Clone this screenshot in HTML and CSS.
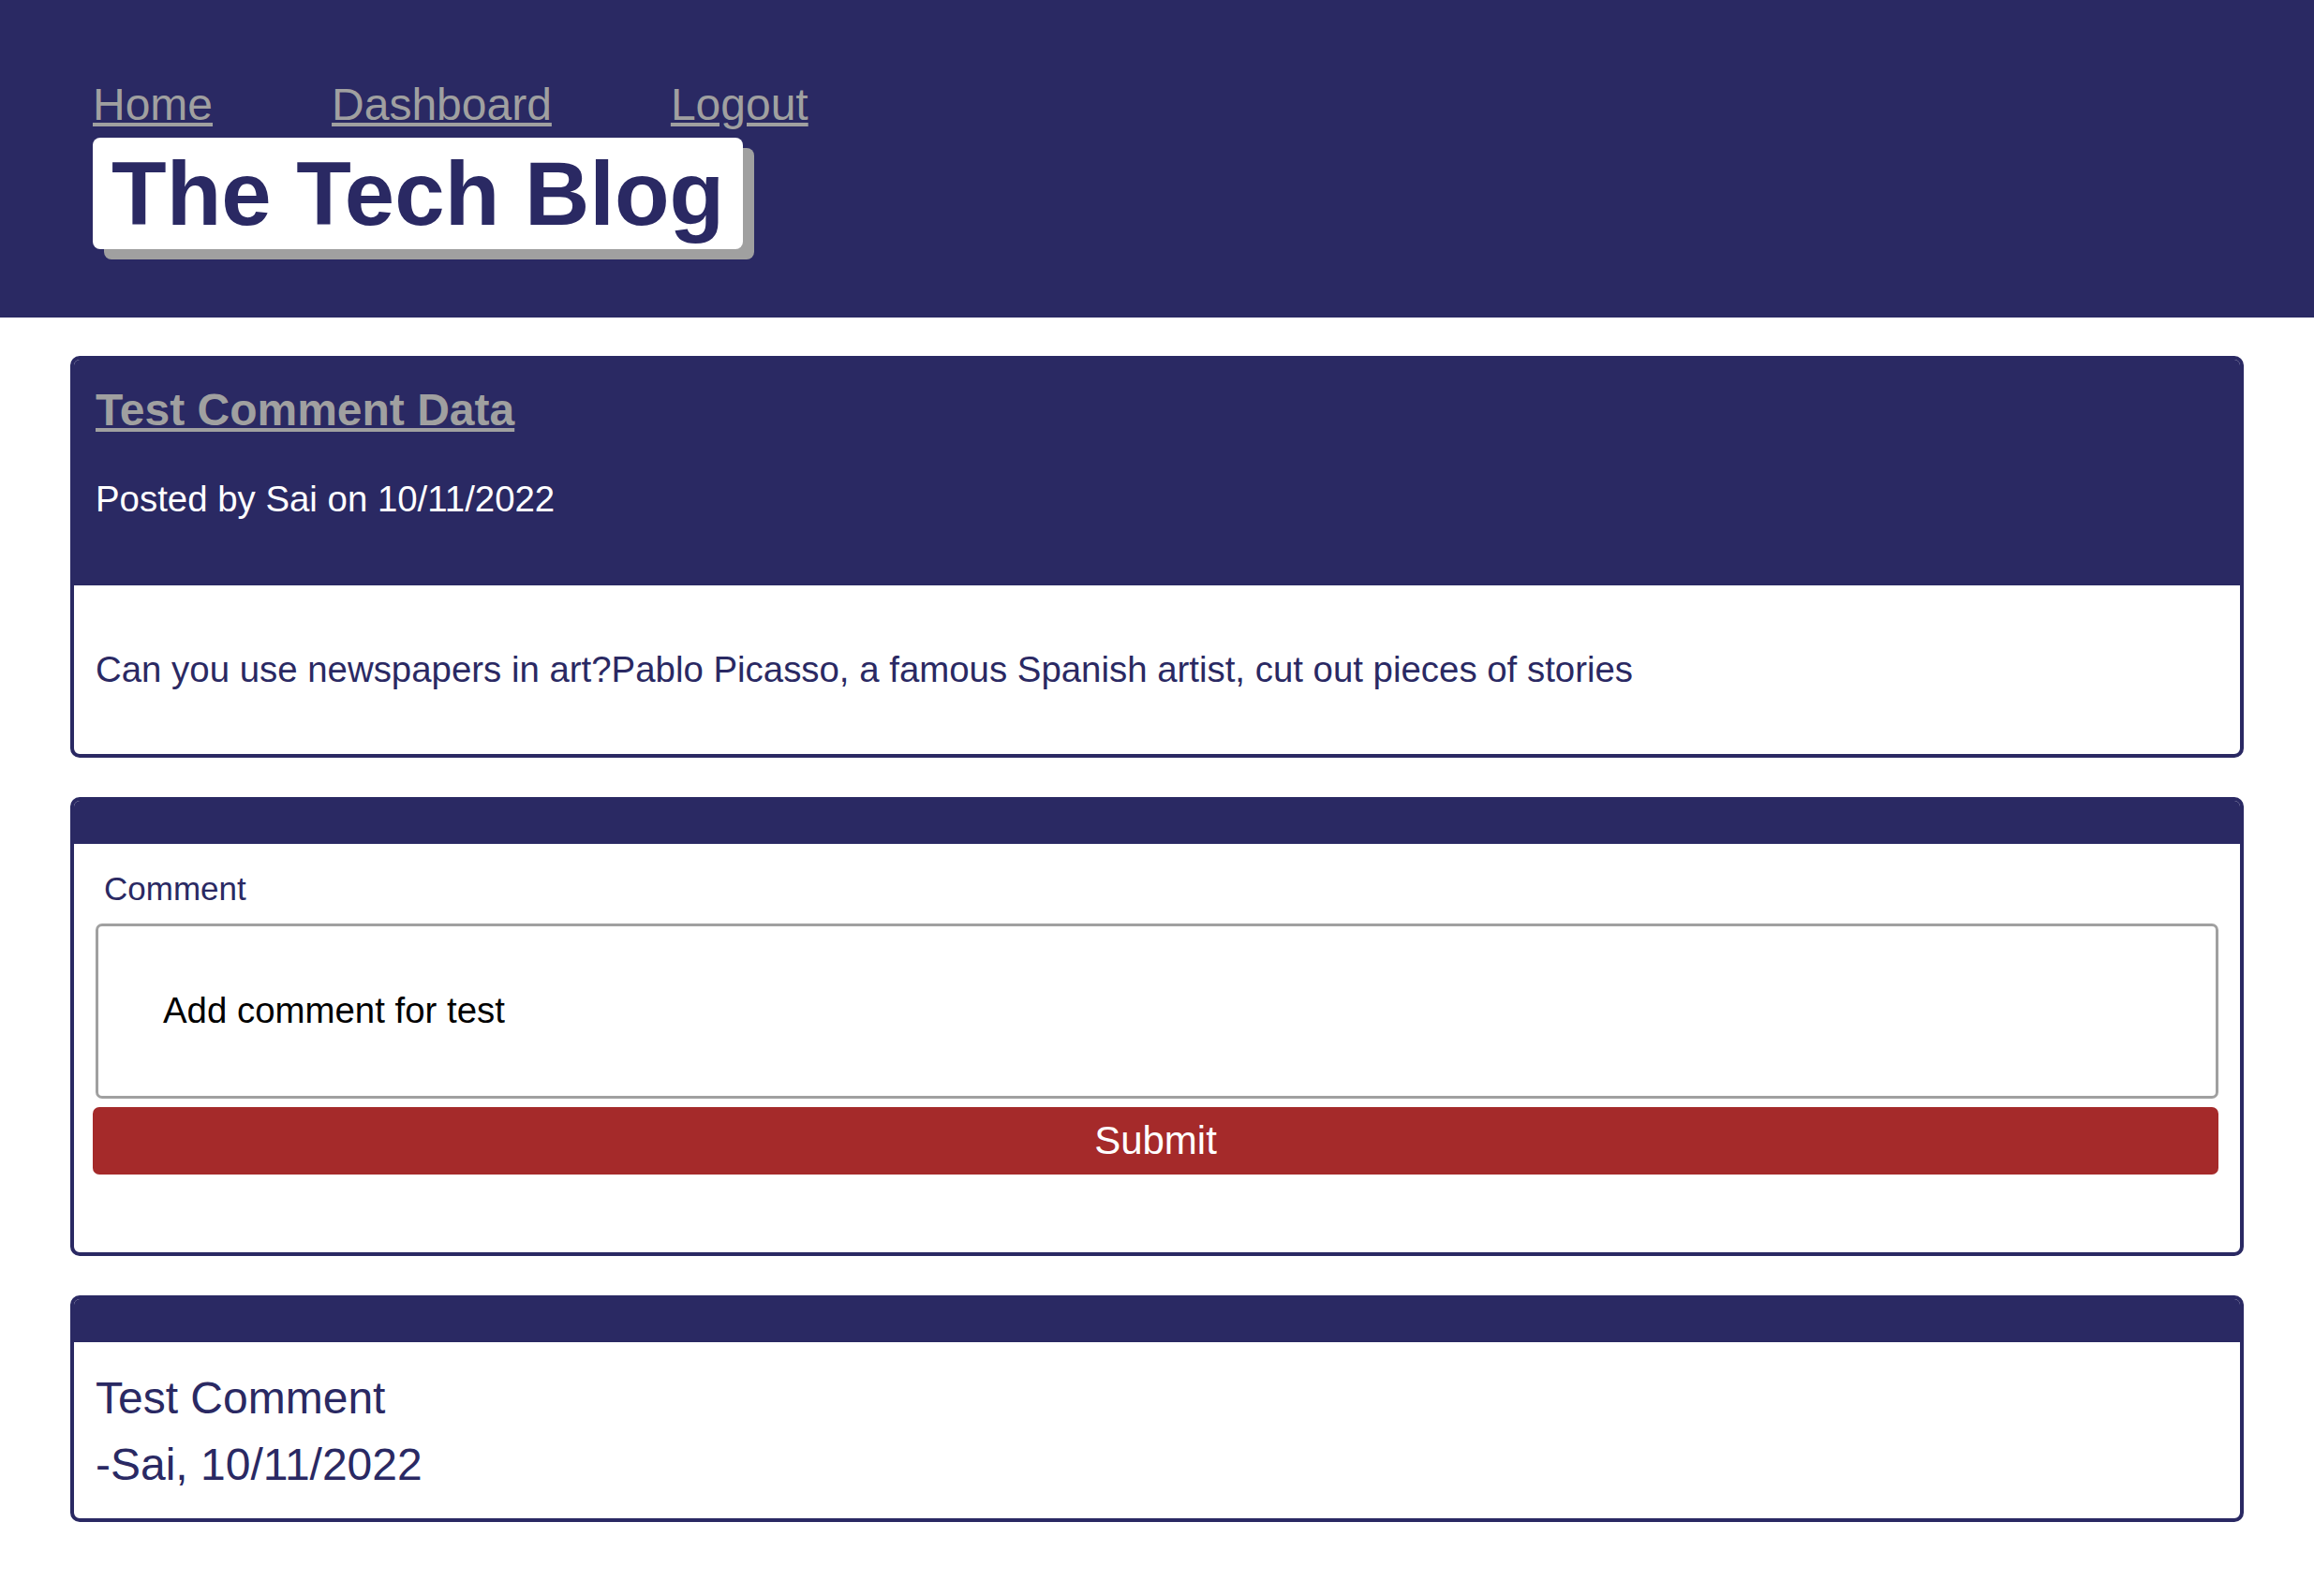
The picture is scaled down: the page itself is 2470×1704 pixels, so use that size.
FILE: index.html
```html
<!DOCTYPE html>
<html lang="en">
<head>
<meta charset="utf-8">
<title>The Tech Blog</title>
<link rel="stylesheet" href="styles.css">
</head>
<body>
<header class="site-header">
  <nav class="nav">
    <a href="#" class="nav-link">Home</a>
    <a href="#" class="nav-link">Dashboard</a>
    <a href="#" class="nav-link">Logout</a>
  </nav>
  <h1 class="brand">The Tech Blog</h1>
</header>
<main class="main">
  <article class="card">
    <div class="card-header post-header">
      <h2 class="post-title"><a href="#">Test Comment Data</a></h2>
      <p class="post-meta">Posted by Sai on 10/11/2022</p>
    </div>
    <div class="card-body post-body">
      <p>Can you use newspapers in art?Pablo Picasso, a famous Spanish artist, cut out pieces of stories</p>
    </div>
  </article>

  <section class="card">
    <div class="card-header empty-header"></div>
    <form class="card-body comment-form">
      <label class="comment-label" for="comment">Comment</label>
      <textarea id="comment" class="comment-input">Add comment for test</textarea>
      <button type="button" class="submit-btn">Submit</button>
    </form>
  </section>

  <section class="card">
    <div class="card-header empty-header"></div>
    <div class="card-body comment">
      <div class="comment-text">Test Comment</div>
      <div class="comment-text">-Sai, 10/11/2022</div>
    </div>
  </section>
</main>
</body>
</html>
```

FILE: styles.css
```css
* { box-sizing: border-box; }

html, body {
  margin: 0;
  padding: 0;
  background: #ffffff;
  font-family: "Liberation Sans", Arial, Helvetica, sans-serif;
  color: #2a2963;
}

.site-header {
  background: #2a2963;
  height: 339px;
  padding: 84px 0 0 99px;
}

.nav {
  display: flex;
  gap: 127px;
}

.nav-link {
  font-size: 48px;
  line-height: 55px;
  color: #a0a0a0;
  text-decoration: underline;
}

.brand {
  display: inline-block;
  margin: 8px 0 0 0;
  padding: 5px 20px 5px 20px;
  background: #ffffff;
  color: #2a2963;
  font-size: 96px;
  font-weight: bold;
  line-height: 109px;
  border-radius: 8px;
  box-shadow: 12px 11px 0 0 #a0a0a0;
}

.main {
  padding: 41px 75px 40px;
}

.card {
  border: 4px solid #2a2963;
  border-radius: 10px;
  overflow: hidden;
  margin-bottom: 42px;
  background: #ffffff;
}

.card-header {
  background: #2a2963;
}

.post-header {
  padding: 27px 23px;
}

.post-title {
  margin: 0;
  font-size: 48px;
  line-height: 53px;
  font-weight: bold;
}

.post-title a {
  color: #a0a0a0;
  text-decoration: underline;
}

.post-meta {
  margin: 47px 0 43px;
  font-size: 38.4px;
  line-height: 44px;
  color: #ffffff;
}

.empty-header {
  height: 46px;
}

.post-body {
  padding: 68px 23px;
}

.post-body p {
  margin: 0;
  font-size: 38.4px;
  line-height: 44px;
  color: #2a2963;
}

.comment-form {
  display: flex;
  flex-direction: column;
  padding: 28px 23px 83px;
}

.comment-label {
  font-size: 35px;
  line-height: 40px;
  padding-left: 9px;
  color: #2a2963;
}

.comment-input {
  display: block;
  width: 100%;
  height: 187px;
  margin-top: 17px;
  padding: 68px 69px;
  border: 3px solid #a0a0a0;
  border-radius: 7px;
  font-family: "Liberation Sans", Arial, Helvetica, sans-serif;
  font-size: 38.4px;
  line-height: 44px;
  color: #000000;
  resize: none;
  overflow: hidden;
  background: #ffffff;
}

.submit-btn {
  display: block;
  width: calc(100% + 3px);
  margin: 9px 0 0 -3px;
  height: 72px;
  border: none;
  border-radius: 7px;
  background: #a52a2a;
  color: #ffffff;
  font-family: "Liberation Sans", Arial, Helvetica, sans-serif;
  font-size: 42px;
  line-height: 46px;
  cursor: pointer;
}

.comment {
  padding: 24px 23px 22px;
}

.comment-text {
  font-size: 48px;
  line-height: 71px;
  color: #2a2963;
}
```
